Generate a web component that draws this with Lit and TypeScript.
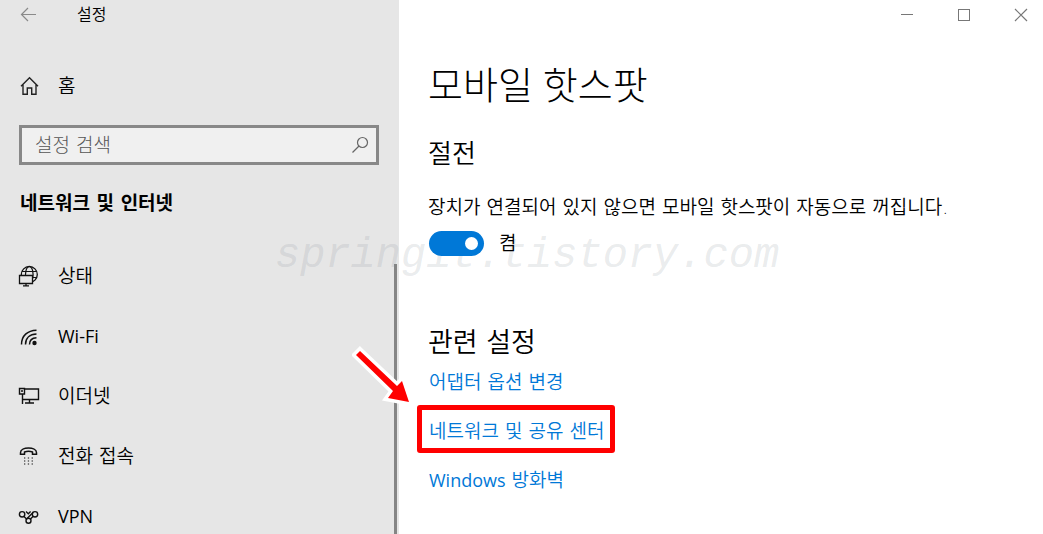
import { LitElement, html, css, svg } from "lit";
import { customElement, state } from "lit/decorators.js";

const icons = {
  back: svg`<path d="M22 14.5H7.500M14 8L7.500 14.500L14 21" stroke="#8a8a8a" stroke-width="1.200"/>`,
  home: svg`<path d="M7 15.200L15.500 6.800L24 15.200M9 13.500V23.300H13.300V17H17.700V23.300H22V13.500" stroke="#222" stroke-width="1.400"/>`,
  status: svg`<circle cx="15.300" cy="13.500" r="8" stroke="#111" stroke-width="1.300"/><ellipse cx="15.300" cy="13.500" rx="3.800" ry="8" stroke="#111" stroke-width="1.200"/><path d="M8 10.500H22.700M8 16.500H22.700" stroke="#111" stroke-width="1.200"/><path d="M5.500 14.500H18.500V22.500H5.500Z" fill="#e6e6e6" stroke="#111" stroke-width="1.300"/><path d="M12 22.500V24.500M9 24.800H15" stroke="#111" stroke-width="1.300"/>`,
  wifi: svg`<path d="M7.500 23.500C7.500 14.500 13.500 9.500 22.500 9.200M11.500 23.500C11.500 17 16 13.200 22.500 13M15.500 23.500C15.500 19.500 18 17 22.500 16.800" stroke="#111" stroke-width="1.500"/><circle cx="20.500" cy="22" r="2.200" fill="#111"/>`,
  ethernet: svg`<path d="M11 8H24.500V18.500H9M15.500 18.500V22M11 22H20M5.500 7.500H10.500V13H5.500ZM7 10H9M8.500 13V23" stroke="#111" stroke-width="1.400"/>`,
  phone: svg`<path d="M6.500 11.800C6.500 5.500 22.500 5.500 22.500 11.800V13.300H18.500V11C16 10.200 13 10.200 10.500 11V13.300H6.500Z" stroke="#111" stroke-width="1.500"/><path d="M10 17H19M10 20H19M10 23H19" stroke="#111" stroke-width="1.200" stroke-dasharray="1.300 2.500"/>`,
  vpn: svg`<circle cx="8.100" cy="13.300" r="2.700" stroke="#111" stroke-width="1.400"/><circle cx="21" cy="13.300" r="2.700" stroke="#111" stroke-width="1.400"/><circle cx="14.500" cy="19.800" r="2.500" stroke="#111" stroke-width="1.400"/><path d="M9.800 15.300L12.500 18M12.800 17.800L19.300 11.300M16.500 18L19.200 15.300M12 10.500L14.300 12.800L16.600 10.500" stroke="#111" stroke-width="1.300"/>`,
};

const icon = (body: unknown) =>
  html`<svg class="icon" viewBox="0 0 30 30" fill="none" aria-hidden="true">${body}</svg>`;

const items = [
  { label: "상태", icon: icons.status },
  { label: "Wi-Fi", icon: icons.wifi, latin: true },
  { label: "이더넷", icon: icons.ethernet },
  { label: "전화 접속", icon: icons.phone },
  { label: "VPN", icon: icons.vpn, latin: true },
];

@customElement("app-root")
export class AppRoot extends LitElement {
  @state() private powerSave = true;

  static styles = css`
    :host {
      display: block;
      position: relative;
      height: 100vh;
      overflow: hidden;
      background: #fff;
      color: #000;
      font: 350 19px/28px "DejaVu Sans", "Noto Sans CJK KR", sans-serif;
    }
    * { box-sizing: border-box; }
    .window { display: flex; height: 100%; }
    .sidebar {
      flex: 0 0 399px;
      display: flex;
      flex-direction: column;
      background: #e6e6e6;
      min-height: 0;
    }
    .main { flex: 1; min-width: 0; }
    button { border: 0; padding: 0; background: none; font: inherit; color: inherit; }
    a { text-decoration: none; }
    .icon { width: 30px; height: 30px; flex: none; display: block; }
    .bar { display: flex; align-items: center; height: 30px; flex: none; }
    .sidebar .bar { padding-left: 14px; gap: 33px; font-size: 16px; }
    .main .bar { justify-content: flex-end; padding-right: 7px; gap: 27px; }
    .row {
      display: flex;
      align-items: center;
      height: 60px;
      padding-left: 14px;
      gap: 14px;
      color: inherit;
    }
    .home { margin-top: 26px; }
    .latin { font-family: "Open Sans", sans-serif; font-size: 18px; font-weight: 400; }
    .search {
      display: flex;
      align-items: center;
      height: 40px;
      margin: 9px 20px 0 19px;
      padding: 0 6px 0 13px;
      border: 3px solid #888;
      background: #f0f0f0;
      flex: none;
    }
    .search input {
      flex: 1;
      min-width: 0;
      border: 0;
      padding: 0;
      background: none;
      outline: none;
      font: inherit;
      font-weight: 300;
    }
    .search input::placeholder { color: #555; opacity: 1; }
    .glass { width: 20px; height: 20px; display: block; }
    .group { margin: 24px 20px 0; font-size: 19px; line-height: 28px; font-weight: 700; }
    .list { flex: 1; min-height: 0; display: flex; margin-top: 29px; }
    .items { flex: 1; list-style: none; margin: 0; padding: 0; }
    .thumb { width: 3px; margin: 18px 2px 0 0; background: #858585; }
    .content { padding: 30px 20px 0 29px; }
    h1 { margin: 0; font-family: "Open Sans", "Noto Sans CJK KR", sans-serif; font-size: 38px; line-height: 48px; font-weight: 300; }
    h2 { margin: 28px 0 0; font-size: 26px; line-height: 36px; font-weight: 350; }
    .related { margin-top: 69px; font-size: 27px; }
    p { margin: 21px 0 0; }
    .switch { display: flex; align-items: center; gap: 15px; height: 26px; margin: 9px 0 0 1px; position: relative; z-index: 2; }
    .switch input {
      appearance: none;
      width: 55px;
      height: 25px;
      margin: 0;
      padding: 6px;
      border-radius: 13px;
      background: #888;
      display: flex;
    }
    .switch input::before { content: ""; width: 13px; height: 13px; border-radius: 50%; background: #fff; }
    .switch input:checked { background: #0078d7; justify-content: flex-end; }
    .links { display: flex; flex-direction: column; align-items: flex-start; gap: 21px; margin: 7px 0 0 1px; }
    .links a { color: #0078d7; }
    .marked { position: relative; }
    .marked::after {
      content: "";
      position: absolute;
      inset: -12px -11px -8px -12px;
      border: 5px solid #f00;
      border-radius: 3px;
    }
    .arrow { position: absolute; left: -77px; top: -72px; width: 62px; height: 62px; }
    .watermark {
      position: absolute;
      left: 275px;
      top: 228px;
      z-index: 1;
      pointer-events: none;
      font: italic 42px/56px "Liberation Mono", monospace;
      color: rgba(130, 140, 148, 0.18);
    }
  `;

  render() {
    return html`
      <div class="window">
        <aside class="sidebar">
          <header class="bar">
            <button aria-label="뒤로">${icon(icons.back)}</button>
            <span>설정</span>
          </header>
          <a class="row home" href="#home">${icon(icons.home)}<span>홈</span></a>
          <label class="search">
            <input type="text" placeholder="설정 검색" aria-label="설정 검색" />
            <svg class="glass" viewBox="0 0 20 20" fill="none" stroke="#666" stroke-width="1.2" aria-hidden="true">
              <circle cx="12.500" cy="7.500" r="5" /><path d="M9 11L2.500 17.500" />
            </svg>
          </label>
          <h2 class="group">네트워크 및 인터넷</h2>
          <nav class="list">
            <ul class="items">
              ${items.map(
                (item) => html`<li>
                  <a class="row ${item.latin ? "latin" : ""}" href="#">${icon(item.icon)}<span>${item.label}</span></a>
                </li>`
              )}
            </ul>
            <div class="thumb"></div>
          </nav>
        </aside>
        <main class="main">
          <header class="bar">
            <button aria-label="최소화">${icon(svg`<path d="M9 14.500H21" stroke="#777"/>`)}</button>
            <button aria-label="최대화">${icon(svg`<rect x="9.500" y="9.500" width="11" height="11" stroke="#777"/>`)}</button>
            <button aria-label="닫기">${icon(svg`<path d="M9 9L21 21M21 9L9 21" stroke="#777" stroke-width="1.200"/>`)}</button>
          </header>
          <div class="content">
            <h1>모바일 핫스팟</h1>
            <h2>절전</h2>
            <p>장치가 연결되어 있지 않으면 모바일 핫스팟이 자동으로 꺼집니다.</p>
            <label class="switch">
              <input
                type="checkbox"
                role="switch"
                .checked=${this.powerSave}
                @change=${(e: Event) => (this.powerSave = (e.target as HTMLInputElement).checked)}
              />
              <span>${this.powerSave ? "켬" : "끔"}</span>
            </label>
            <h2 class="related">관련 설정</h2>
            <div class="links">
              <a href="#adapter">어댑터 옵션 변경</a>
              <a class="marked" href="#sharing">네트워크 및 공유 센터
                <svg class="arrow" viewBox="0 0 62 62" aria-hidden="true">
                  <path d="M8 6L45 41L50 36L57 57L36 53L41 46L4 10Z" fill="#f00" stroke="#fff" stroke-width="7" paint-order="stroke" />
                </svg>
              </a>
              <a href="#firewall"><span class="latin">Windows</span> 방화벽</a>
            </div>
          </div>
        </main>
      </div>
      <div class="watermark">springit.tistory.com</div>
    `;
  }
}
